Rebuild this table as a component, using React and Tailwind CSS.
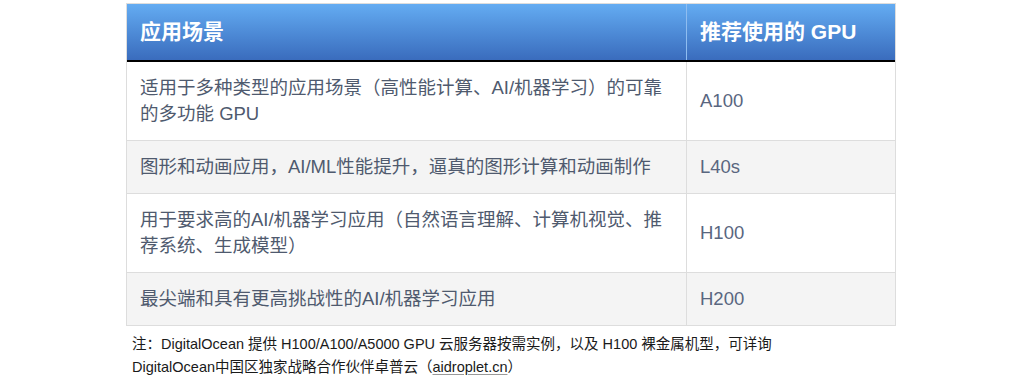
export default function App() {
  const rows = [
    ["适用于多种类型的应用场景（高性能计算、AI/机器学习）的可靠的多功能 GPU", "A100"],
    ["图形和动画应用，AI/ML性能提升，逼真的图形计算和动画制作", "L40s"],
    ["用于要求高的AI/机器学习应用（自然语言理解、计算机视觉、推荐系统、生成模型）", "H100"],
    ["最尖端和具有更高挑战性的AI/机器学习应用", "H200"],
  ];
  const font = { fontFamily: '"Liberation Sans", "Noto Sans CJK SC", sans-serif' };
  return (
    <div className="w-[1024px] h-[388px] bg-white pt-[3px]" style={font}>
      <div className="ml-[126px] w-[770px]">
        <div className="border border-[#dddddd]">
          <div className="grid grid-cols-[560px_1fr] bg-gradient-to-b from-[#64acf2] to-[#3a6cbd] border-b-2 border-black">
            <div className="px-[13px] h-[56px] flex items-center text-white font-bold text-[21px] border-r border-[#8fbdf0]">应用场景</div>
            <div className="px-[13px] h-[56px] flex items-center text-white font-bold text-[21px]">推荐使用的 GPU</div>
          </div>
          {rows.map((r, i) => (
            <div
              key={i}
              className={`grid grid-cols-[560px_1fr] ${i % 2 === 1 ? "bg-[#f4f4f4]" : "bg-white"} ${i < rows.length - 1 ? "border-b border-[#dddddd]" : ""}`}
            >
              <div className="px-[13px] py-[13px] text-[18.5px] leading-[26px] text-[#4f5a6e] border-r border-[#dddddd]">{r[0]}</div>
              <div className="px-[13px] py-[13px] text-[18.5px] leading-[26px] text-[#59667f] flex items-center">{r[1]}</div>
            </div>
          ))}
        </div>
        <div className="pl-[6px] pt-[7px] text-[14.5px] leading-[23px] text-[#1a1a1a]">
          注：DigitalOcean 提供 H100/A100/A5000 GPU 云服务器按需实例，以及 H100 裸金属机型，可详询
          <br />
          DigitalOcean中国区独家战略合作伙伴卓普云（<span className="underline decoration-[#999] underline-offset-2">aidroplet.cn</span>）
        </div>
      </div>
    </div>
  );
}
